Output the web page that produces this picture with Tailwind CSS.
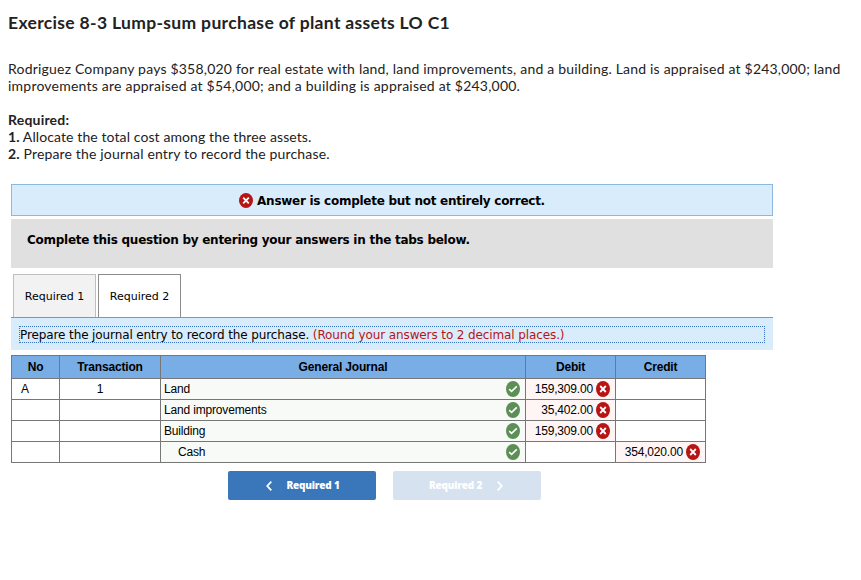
<!DOCTYPE html>
<html class="bg-white">
<head>
  <meta charset="utf-8">
  <title>Exercise 8-3</title>
  <script src="https://cdn.jsdelivr.net/npm/@tailwindcss/browser@4"></script>
</head>
<body class="w-[861px] h-[580px] overflow-hidden text-black font-['DejaVu_Sans',Verdana,sans-serif]">
  <!-- shared icons -->
  <svg class="hidden">
    <symbol id="wrong" viewBox="0 0 14 15" preserveAspectRatio="none">
      <ellipse cx="7" cy="7.5" rx="7" ry="7.5" fill="#b81414" />
      <path d="M4.2 4.7l5.6 5.6M9.8 4.7l-5.6 5.6" stroke="#fff" stroke-width="1.8" fill="none" />
    </symbol>
    <symbol id="right" viewBox="0 0 14 16">
      <ellipse cx="7" cy="8" rx="7" ry="8" fill="#5b8f55" />
      <path d="M3.2 8.1l2.4 2.3 5.2-5" stroke="#fff" stroke-width="1.6" fill="none" />
    </symbol>
  </svg>

  <div class="pl-2 pt-3 h-[184px] text-[#222] font-[Lato,sans-serif] text-[14px] leading-[17px] whitespace-nowrap">
    <h1 class="text-[17.5px] leading-[21px] font-bold tracking-[0.33px]">Exercise 8-3 Lump-sum purchase of plant assets LO C1</h1>
    <p class="mt-[27px] tracking-[0.2px]">Rodriguez Company pays $358,020 for real estate with land, land improvements, and a building. Land is appraised at $243,000; land</p>
    <p class="tracking-[0.22px]">improvements are appraised at $54,000; and a building is appraised at $243,000.</p>
    <p class="mt-[17px] font-bold tracking-[0.2px]">Required:</p>
    <p class="tracking-[0.1px]"><b>1.</b> Allocate the total cost among the three assets.</p>
    <p class="tracking-[0.16px]"><b>2.</b> Prepare the journal entry to record the purchase.</p>
  </div>

  <div class="ml-[11px] w-[762px]">
    <div class="h-8 pt-px flex items-center justify-center gap-1 bg-[#d9ecfb] border border-[#8fb8de] text-[12px] font-bold tracking-[-0.27px]">
      <svg class="w-[14px] h-[15px]"><use href="#wrong" /></svg>
      <span>Answer is complete but not entirely correct.</span>
    </div>
    <div class="mt-[3px] h-[49px] pl-4 pt-3 bg-[#e0e0e0] text-[12px] leading-[18px] font-bold tracking-[-0.26px]">Complete this question by entering your answers in the tabs below.</div>

    <div class="mt-[6px] pl-[2px] flex gap-[2px] text-[11px]">
      <div class="w-[83px] h-[43px] pt-[2px] flex items-center justify-center bg-[#f2f2f2] border border-b-0 border-[#bfbfbf]">Required 1</div>
      <div class="w-[83px] h-[43px] pt-[2px] flex items-center justify-center bg-white border border-b-0 border-[#8c8c8c]">Required 2</div>
    </div>
    <div class="h-[33px] border-t border-[#8c959d] bg-[#d9ecfb] px-2 pt-2">
      <div class="h-[17px] border border-dotted border-[#3a73c4] text-[12px] leading-[16px] tracking-[-0.11px] whitespace-nowrap">Prepare the journal entry to record the purchase. <span class="text-[#b81414]">(Round your answers to 2 decimal places.)</span></div>
    </div>

    <table class="mt-[5px] w-[695px] table-fixed border-collapse font-['Liberation_Sans',Arial,sans-serif] text-[12px] leading-[20px] tracking-[-0.17px] [&_td]:border [&_td]:border-[#777] [&_td]:p-0 [&_td]:h-[21px] [&_th]:border [&_th]:border-[#777] [&_th]:p-0 [&_th]:h-[23px]">
      <colgroup>
        <col class="w-[48px]"><col class="w-[101px]"><col class="w-[365px]"><col class="w-[90px]"><col class="w-[90px]">
      </colgroup>
      <tr class="bg-[#79ade6]">
        <th>No</th><th>Transaction</th><th>General Journal</th><th>Debit</th><th>Credit</th>
      </tr>
      <tr>
        <td><div class="pl-[9px]">A</div></td>
        <td><div class="pr-5 text-center">1</div></td>
        <td class="bg-[#f7faf7]"><div class="flex items-center justify-between pl-[3px] pr-[5px]">Land<svg class="w-[14px] h-4"><use href="#right" /></svg></div></td>
        <td class="bg-[#fff5f4]"><div class="flex items-center justify-end gap-[3px] pr-[5px]">159,309.00<svg class="w-[14px] h-4"><use href="#wrong" /></svg></div></td>
        <td></td>
      </tr>
      <tr>
        <td></td><td></td>
        <td class="bg-[#f7faf7]"><div class="flex items-center justify-between pl-[3px] pr-[5px]">Land improvements<svg class="w-[14px] h-4"><use href="#right" /></svg></div></td>
        <td class="bg-[#fff5f4]"><div class="flex items-center justify-end gap-[3px] pr-[5px]">35,402.00<svg class="w-[14px] h-4"><use href="#wrong" /></svg></div></td>
        <td></td>
      </tr>
      <tr>
        <td></td><td></td>
        <td class="bg-[#f7faf7]"><div class="flex items-center justify-between pl-[3px] pr-[5px]">Building<svg class="w-[14px] h-4"><use href="#right" /></svg></div></td>
        <td class="bg-[#fff5f4]"><div class="flex items-center justify-end gap-[3px] pr-[5px]">159,309.00<svg class="w-[14px] h-4"><use href="#wrong" /></svg></div></td>
        <td></td>
      </tr>
      <tr>
        <td></td><td></td>
        <td class="bg-[#f7faf7]"><div class="flex items-center justify-between pl-[17px] pr-[5px]">Cash<svg class="w-[14px] h-4"><use href="#right" /></svg></div></td>
        <td></td>
        <td class="bg-[#fff5f4]"><div class="flex items-center justify-end gap-[3px] pr-[5px]">354,020.00<svg class="w-[14px] h-4"><use href="#wrong" /></svg></div></td>
      </tr>
    </table>

    <div class="mt-2 pl-[217px] flex gap-[17px] font-['Open_Sans',sans-serif] text-[10px] font-extrabold tracking-[-0.2px] text-white">
      <button class="w-[148px] h-[29px] pl-[2px] flex items-center justify-center gap-[14px] rounded-xs bg-[#3a76ba]">
        <svg class="w-[6px] h-[10px]" viewBox="0 0 6 10" fill="none" stroke="currentColor" stroke-width="1.8"><path d="M5.3 .7L1.3 5l4 4.3" /></svg>
        Required 1
      </button>
      <button class="w-[148px] h-[29px] pr-[2px] flex items-center justify-center gap-[15px] rounded-xs bg-[#d7e2f0]">
        Required 2
        <svg class="w-[6px] h-[10px]" viewBox="0 0 6 10" fill="none" stroke="currentColor" stroke-width="1.8"><path d="M.7 .7l4 4.3-4 4.3" /></svg>
      </button>
    </div>
  </div>
</body>
</html>
